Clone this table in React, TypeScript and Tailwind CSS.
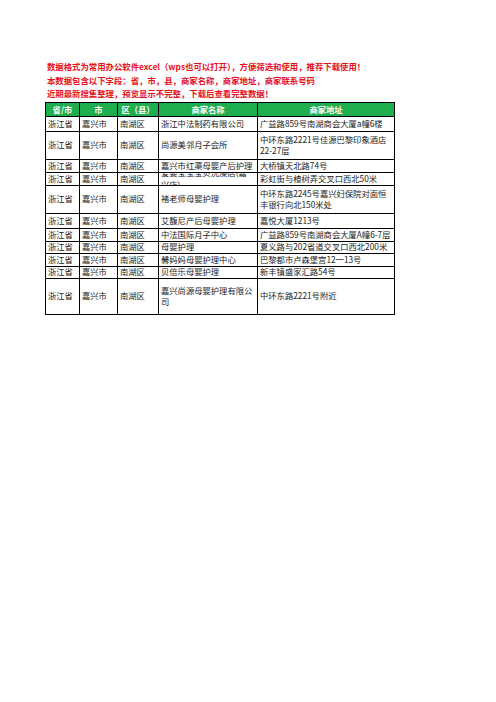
import React from "react";

type Row = { h: number; c: [string, string, string, string, string] };

const rows: Row[] = [
  { h: 15, c: ["浙江省", "嘉兴市", "南湖区", "浙江中法制药有限公司", "广益路859号南湖商会大厦a幢6楼"] },
  { h: 28, c: ["浙江省", "嘉兴市", "南湖区", "尚源美邻月子会所", "中环东路2221号佳源巴黎印象酒店22-27层"] },
  { h: 13, c: ["浙江省", "嘉兴市", "南湖区", "嘉兴市红蕖母婴产后护理", "大桥镇天北路74号"] },
  { h: 13, c: ["浙江省", "嘉兴市", "南湖区", "爱婴宝宝宝贝洗澡店(嘉兴店)", "彩虹街与楂树弄交叉口西北50米"] },
  { h: 28, c: ["浙江省", "嘉兴市", "南湖区", "褚老师母婴护理", "中环东路2245号嘉兴妇保院对面恒丰银行向北150米处"] },
  { h: 15, c: ["浙江省", "嘉兴市", "南湖区", "艾馥尼产后母婴护理", "嘉悦大厦1213号"] },
  { h: 13, c: ["浙江省", "嘉兴市", "南湖区", "中法国际月子中心", "广益路859号南湖商会大厦A幢6-7层"] },
  { h: 12, c: ["浙江省", "嘉兴市", "南湖区", "母婴护理", "夏义路与202省道交叉口西北200米"] },
  { h: 13, c: ["浙江省", "嘉兴市", "南湖区", "馨妈妈母婴护理中心", "巴黎都市卢森堡宫12一13号"] },
  { h: 12, c: ["浙江省", "嘉兴市", "南湖区", "贝倍乐母婴护理", "新丰镇盛家汇路54号"] },
  { h: 36, c: ["浙江省", "嘉兴市", "南湖区", "嘉兴尚源母婴护理有限公司", "中环东路2221号附近"] },
];

const widths = [34, 38, 41, 99, 137];
const headers = ["省/市", "市", "区（县）", "商家名称", "商家地址"];

export default function App() {
  return (
    <div
      className="w-[496px] h-[702px] bg-white relative"
      style={{ fontFamily: '"Noto Sans CJK SC", "Noto Sans", sans-serif' }}
    >
      <div className="pt-[60px] pl-[47px] text-[8.4px] leading-[13.5px] font-bold text-[#e8101c]">
        <div>数据格式为常用办公软件excel（wps也可以打开），方便筛选和使用，推荐下载使用！</div>
        <div>本数据包含以下字段：省，市，县，商家名称，商家地址，商家联系号码</div>
        <div>近期最新搜集整理，预览显示不完整，下载后查看完整数据！</div>
      </div>
      <table className="ml-[45px] mt-[1px] border-collapse table-fixed text-[8.3px] text-[#222]">
        <colgroup>
          {widths.map((w, i) => (
            <col key={i} style={{ width: w }} />
          ))}
        </colgroup>
        <thead>
          <tr>
            {headers.map((h, i) => (
              <th key={i} className="border border-black bg-[#1fae4e] p-0 font-bold text-white">
                <div className="h-[13px] flex items-center justify-center leading-[11px]">{h}</div>
              </th>
            ))}
          </tr>
        </thead>
        <tbody>
          {rows.map((r, ri) => (
            <tr key={ri}>
              {r.c.map((t, ci) => (
                <td key={ci} className="border border-black p-0 align-middle">
                  <div
                    className="flex items-center overflow-hidden px-[2px] leading-[11.4px]"
                    style={{ height: r.h - 1 }}
                  >
                    <span>{t}</span>
                  </div>
                </td>
              ))}
            </tr>
          ))}
        </tbody>
      </table>
    </div>
  );
}
